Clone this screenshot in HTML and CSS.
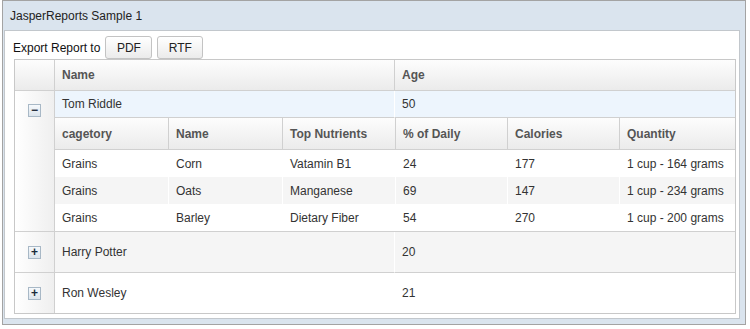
FILE: index.html
```html
<!DOCTYPE html>
<html>
<head>
<meta charset="utf-8">
<link rel="stylesheet" href="styles.css">
</head>
<body>
<div class="panel">
  <div class="panel-title">JasperReports Sample 1</div>
  <div class="panel-body">
    <div class="toolbar">
      <span class="label">Export Report to</span>
      <button class="btn btn-pdf">PDF</button>
      <button class="btn btn-rtf">RTF</button>
    </div>
    <table class="grid">
      <colgroup><col class="g-exp"><col class="g-name"><col class="g-age"></colgroup>
      <thead>
        <tr><th class="exp"></th><th class="sep">Name</th><th>Age</th></tr>
      </thead>
      <tbody>
        <tr class="sel">
          <td class="exp exp-open" rowspan="2"><span class="toggle">&minus;</span></td>
          <td class="sep">Tom Riddle</td><td>50</td>
        </tr>
        <tr class="detail">
          <td colspan="2" class="nest">
            <table class="sub">
              <colgroup><col class="s1"><col class="s2"><col class="s3"><col class="s4"><col class="s5"><col class="s6"></colgroup>
              <thead>
                <tr><th>cagetory</th><th>Name</th><th>Top Nutrients</th><th>% of Daily</th><th>Calories</th><th class="last">Quantity</th></tr>
              </thead>
              <tbody>
                <tr><td>Grains</td><td>Corn</td><td>Vatamin B1</td><td>24</td><td>177</td><td class="last">1 cup - 164 grams</td></tr>
                <tr class="alt"><td>Grains</td><td>Oats</td><td>Manganese</td><td>69</td><td>147</td><td class="last">1 cup - 234 grams</td></tr>
                <tr><td>Grains</td><td>Barley</td><td>Dietary Fiber</td><td>54</td><td>270</td><td class="last">1 cup - 200 grams</td></tr>
              </tbody>
            </table>
          </td>
        </tr>
        <tr class="row alt">
          <td class="exp"><span class="toggle">+</span></td>
          <td class="sep">Harry Potter</td><td>20</td>
        </tr>
        <tr class="row last-row">
          <td class="exp"><span class="toggle">+</span></td>
          <td class="sep">Ron Wesley</td><td>21</td>
        </tr>
      </tbody>
    </table>
  </div>
</div>
</body>
</html>
```

FILE: styles.css
```css
* { box-sizing: border-box; }
html, body { margin: 0; padding: 0; background: #fff; }
body {
  font-family: "Liberation Sans", Arial, sans-serif;
  font-size: 12px;
  color: #333;
}
.panel {
  margin-left: 2px;
  width: 744px;
  height: 325px;
  border: 1px solid #a3a3a3;
  background: #dae4ee;
  display: flex;
  flex-direction: column;
}
.panel-title {
  height: 29px;
  line-height: 30px;
  padding-left: 7px;
  color: #222;
  font-size: 12px;
}
.panel-body {
  margin: 0 5px 5px 1px;
  background: #fff;
  border: 1px solid #c2c7cc;
  padding-bottom: 4px;
}
.toolbar {
  display: flex;
  align-items: center;
  padding: 5px 0 0 8px;
  height: 28px;
}
.label { color: #111; margin-right: 5px; }
.btn {
  font-family: "Liberation Sans", Arial, sans-serif;
  font-size: 12px;
  color: #222;
  height: 23px;
  padding: 0;
  border: 1px solid #c3c3c3;
  border-radius: 3px;
  background: linear-gradient(#ffffff, #ebebeb);
}
.btn-pdf { width: 47px; margin-right: 5px; }
.btn-rtf { width: 46px; }

.grid {
  margin-left: 9px;
  width: 722px;
  table-layout: fixed;
  border-collapse: separate;
  border-spacing: 0;
  border: 1px solid #c8c8c8;
}
.g-exp { width: 40px; }
.g-name { width: 340px; }
.g-age { width: 340px; }

.grid th, .grid td { padding: 0 0 0 7px; text-align: left; white-space: nowrap; }
.grid > thead th {
  height: 31px;
  font-weight: bold;
  color: #555;
  background: linear-gradient(#fdfdfd, #ebebeb);
  border-bottom: 1px solid #d0d0d0;
}
.grid > thead th.exp { border-right: 1px solid #d0d0d0; padding: 0; }
.grid > thead th.sep { border-right: 1px solid #d0d0d0; }

.grid td.exp {
  padding: 0;
  text-align: center;
  border-right: 1px solid #d0d0d0;
  border-bottom: 1px solid #d0d0d0;
  background: linear-gradient(to right, #ffffff, #efefef);
}
.grid .last-row td.exp { border-bottom: none; }
.grid td.exp-open { vertical-align: top; padding-top: 13px; }

.toggle {
  display: inline-block;
  width: 13px;
  height: 13px;
  border: 1px solid #a8b8c6;
  background: linear-gradient(#f6f9fc, #dbe4ec);
  line-height: 10px;
  font-size: 12px;
  font-weight: bold;
  color: #1a2a3a;
  text-align: center;
  vertical-align: top;
}
.row .toggle { vertical-align: middle; }

.sel td { height: 27px; background: #edf5fd; border-bottom: 1px solid #d0d0d0; }
.sel td.exp { background: linear-gradient(to right, #ffffff, #efefef); }
.grid td.sep { border-right: 1px solid #fff; }
.grid .row td { height: 41px; border-bottom: 1px solid #d0d0d0; }
.grid .last-row td { height: 40px; border-bottom: none; }
.grid .row.alt td { background: #f5f5f5; }
.grid .row.alt td.exp { background: linear-gradient(to right, #ffffff, #efefef); }

.grid td.nest { padding: 0; border-bottom: 1px solid #d0d0d0; }
.sub {
  width: 680px;
  table-layout: fixed;
  border-collapse: separate;
  border-spacing: 0;
}
.s1 { width: 114px; }
.s2 { width: 114px; }
.s3 { width: 113px; }
.s4 { width: 112px; }
.s5 { width: 112px; }
.s6 { width: 115px; }
.sub th {
  height: 32px;
  font-weight: bold;
  color: #555;
  background: linear-gradient(#fdfdfd, #ebebeb);
  border-right: 1px solid #d0d0d0;
  border-bottom: 1px solid #d0d0d0;
}
.sub td { height: 27px; border-right: 1px solid #fff; }
.sub .alt td { background: #f5f5f5; }
.sub .last { border-right: none; }
```
